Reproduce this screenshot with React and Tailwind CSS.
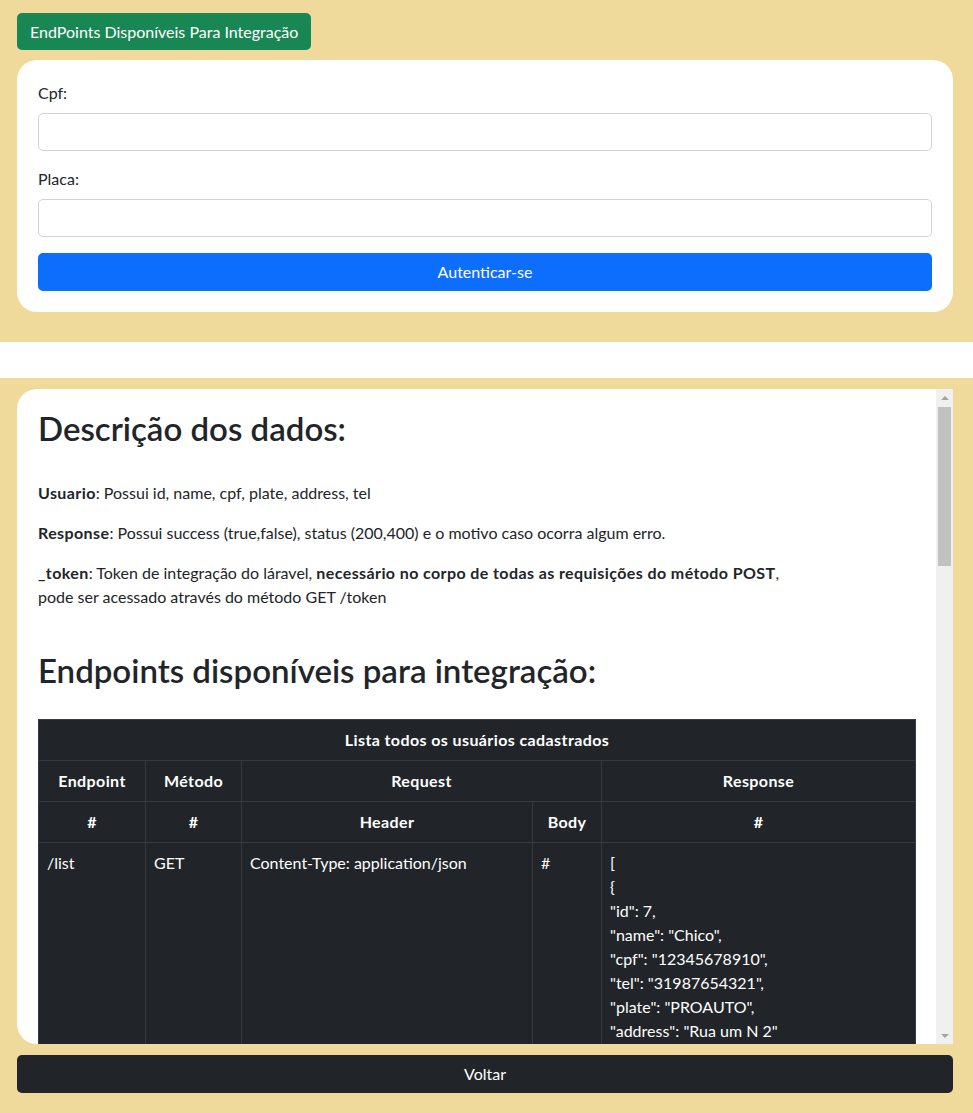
import React from "react";

const cell = "border border-[#373b3e] px-2 py-2 leading-6 align-top";
const th =
  "border border-[#373b3e] px-2 py-2 leading-6 font-bold tracking-[0.025em] text-center align-top";

function EndpointTable({ title, endpoint, method, header, body, response }) {
  return (
    <table className="w-[877px] table-fixed border-collapse bg-[#212529] text-white text-[16px] mb-[24px]">
      <colgroup>
        <col className="w-[107px]" />
        <col className="w-[96px]" />
        <col className="w-[291px]" />
        <col className="w-[69px]" />
        <col className="w-[314px]" />
      </colgroup>
      <thead>
        <tr>
          <th colSpan={5} className={th}>{title}</th>
        </tr>
        <tr>
          <th className={th}>Endpoint</th>
          <th className={th}>Método</th>
          <th colSpan={2} className={th}>Request</th>
          <th className={th}>Response</th>
        </tr>
        <tr>
          <th className={th}>#</th>
          <th className={th}>#</th>
          <th className={th}>Header</th>
          <th className={th}>Body</th>
          <th className={th}>#</th>
        </tr>
      </thead>
      <tbody>
        <tr>
          <td className={cell}>{endpoint}</td>
          <td className={cell}>{method}</td>
          <td className={cell}>{header}</td>
          <td className={cell}>
            {body.map((l, i) => (
              <div key={i}>{l}</div>
            ))}
          </td>
          <td className={cell}>
            {response.map((l, i) => (
              <div key={i}>{l}</div>
            ))}
          </td>
        </tr>
      </tbody>
    </table>
  );
}

function FakeScrollbar() {
  return (
    <div className="w-[17px] shrink-0 bg-[#f0f0f0] flex flex-col">
      <div className="h-[17px] flex items-center justify-center">
        <div className="w-0 h-0 border-l-[4px] border-r-[4px] border-b-[4px] border-l-transparent border-r-transparent border-b-[#a3a3a3]" />
      </div>
      <div className="flex-1 px-[2px] pt-[1px]">
        <div className="h-[159px] bg-[#c1c1c1]" />
      </div>
      <div className="h-[17px] flex items-center justify-center">
        <div className="w-0 h-0 border-l-[4px] border-r-[4px] border-t-[4px] border-l-transparent border-r-transparent border-t-[#a3a3a3]" />
      </div>
    </div>
  );
}

export default function App() {
  return (
    <div className="font-['Lato',sans-serif] text-[16px] text-[#212529]">
      <section className="bg-[#efd99b] pl-[17px] pr-[20px] pt-[13px] pb-[30px]">
        <button className="h-[37px] px-[13px] bg-[#198754] text-white rounded-[5px] leading-6">
          EndPoints Disponíveis Para Integração
        </button>
        <div className="mt-[10px] bg-white rounded-[20px] p-[21px]">
          <label className="block mb-2 leading-6">Cpf:</label>
          <input className="block w-full h-[38px] border border-[#ced4da] rounded-[5px] px-3 outline-none" />
          <label className="block mt-4 mb-2 leading-6">Placa:</label>
          <input className="block w-full h-[38px] border border-[#ced4da] rounded-[5px] px-3 outline-none" />
          <button className="mt-4 w-full h-[38px] bg-[#0d6efd] text-white rounded-[5px] leading-6">
            Autenticar-se
          </button>
        </div>
      </section>
      <div className="h-[36px] bg-white" />
      <section className="bg-[#efd99b] pl-[17px] pr-[20px] pt-[11px] pb-[20px]">
        <div className="flex h-[655px] bg-white rounded-l-[20px] overflow-hidden">
          <div className="flex-1 min-w-0 overflow-hidden pl-[21px] pt-[21px]">
            <h2 className="text-[33px] font-semibold leading-[36px] mb-[35px]">Descrição dos dados:</h2>
            <p className="leading-6 mb-4">
              <b className="tracking-[0.025em]">Usuario</b>: Possui id, name, cpf, plate, address, tel
            </p>
            <p className="leading-6 mb-4">
              <b className="tracking-[0.025em]">Response</b>: Possui success (true,false), status (200,400) e o motivo caso ocorra algum erro.
            </p>
            <p className="leading-6 mb-[43px]">
              <b className="tracking-[0.025em]">_token</b>: Token de integração do láravel,{" "}
              <b className="tracking-[0.025em]">necessário no corpo de todas as requisições do método POST</b>,
              <br />
              pode ser acessado através do método GET /token
            </p>
            <h2 className="text-[33px] font-semibold leading-[36px] mb-[31px]">
              Endpoints disponíveis para integração:
            </h2>
            <EndpointTable
              title="Lista todos os usuários cadastrados"
              endpoint="/list"
              method="GET"
              header="Content-Type: application/json"
              body={["#"]}
              response={[
                "[",
                "{",
                '"id": 7,',
                '"name": "Chico",',
                '"cpf": "12345678910",',
                '"tel": "31987654321",',
                '"plate": "PROAUTO",',
                '"address": "Rua um N 2"',
                "}",
                "]",
              ]}
            />
            <EndpointTable
              title="Cadastra um novo usuário"
              endpoint="/register"
              method="POST"
              header="Content-Type: application/json"
              body={["_token", "name", "cpf", "tel", "plate", "address"]}
              response={[
                "{",
                '"success": true,',
                '"status": 200,',
                '"message": "Usuário cadastrado"',
                "}",
              ]}
            />
          </div>
          <FakeScrollbar />
        </div>
        <button className="mt-[11px] w-full h-[38px] bg-[#212529] text-white rounded-[5px] leading-6">
          Voltar
        </button>
      </section>
    </div>
  );
}
